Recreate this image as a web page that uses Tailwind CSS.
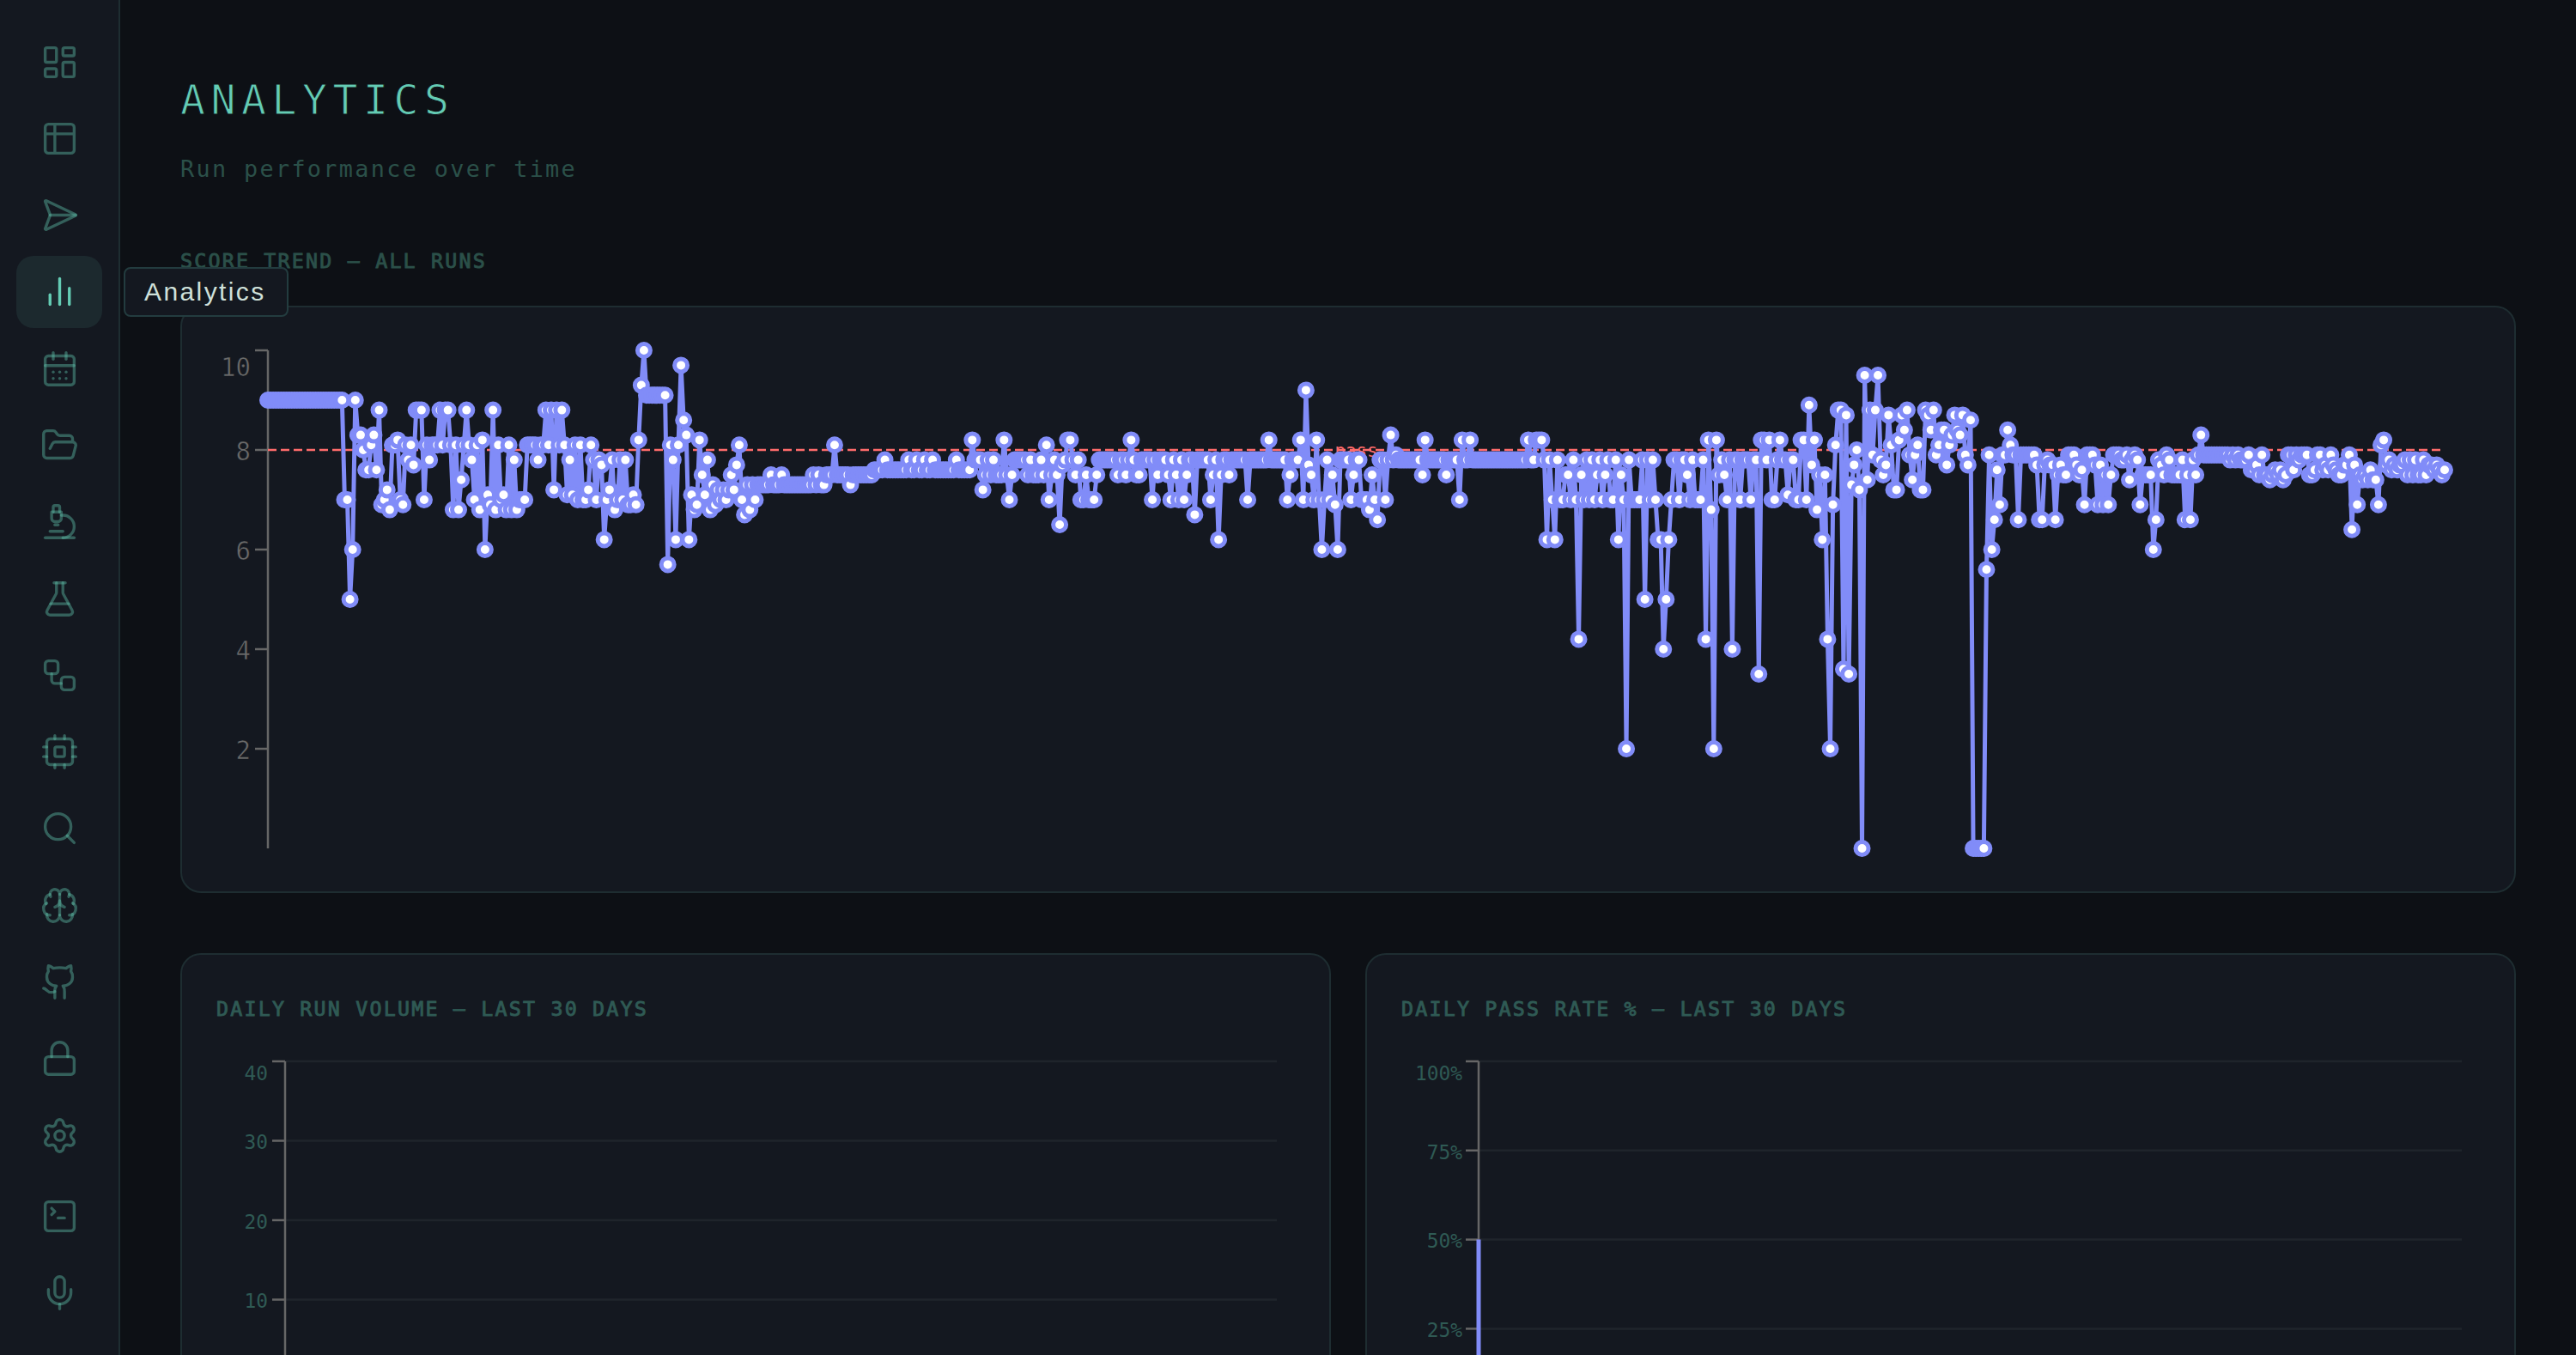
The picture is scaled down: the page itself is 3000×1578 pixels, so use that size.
<!DOCTYPE html>
<html lang="en">
  <head>
    <meta charset="UTF-8" />
    <meta name="viewport" content="width=device-width, initial-scale=1.0" />
    <title>Analytics</title>
    <script src="https://cdn.jsdelivr.net/npm/@tailwindcss/browser@4"></script>
  </head>
  <body class="flex h-screen overflow-hidden bg-[#0d1015] font-['DejaVu_Sans_Mono',monospace]">
    <!-- SIDEBAR -->
    <nav class="relative z-10 flex h-full w-[140px] shrink-0 flex-col items-center gap-[5.3px] border-r-2 border-[#1e2d31] bg-[#141820] pt-[30px] text-[#64ccb4]/40">
      <a class="flex h-[84px] w-[100px] shrink-0 items-center justify-center rounded-[20px]">
        <svg class="size-[45px]" viewBox="0 0 24 24" fill="none" stroke="currentColor" stroke-width="1.8" stroke-linecap="round" stroke-linejoin="round"><rect width="7" height="9" x="3" y="3" rx="1" /><rect width="7" height="5" x="14" y="3" rx="1" /><rect width="7" height="9" x="14" y="12" rx="1" /><rect width="7" height="5" x="3" y="16" rx="1" /></svg>
      </a>
      <a class="flex h-[84px] w-[100px] shrink-0 items-center justify-center rounded-[20px]">
        <svg class="size-[45px]" viewBox="0 0 24 24" fill="none" stroke="currentColor" stroke-width="1.8" stroke-linecap="round" stroke-linejoin="round"><path d="M9 3H5a2 2 0 0 0-2 2v4m6-6h10a2 2 0 0 1 2 2v4M9 3v18m0 0h10a2 2 0 0 0 2-2V9M9 21H5a2 2 0 0 1-2-2V9m0 0h18" /></svg>
      </a>
      <a class="flex h-[84px] w-[100px] shrink-0 items-center justify-center rounded-[20px]">
        <svg class="size-[45px]" viewBox="0 0 24 24" fill="none" stroke="currentColor" stroke-width="1.8" stroke-linecap="round" stroke-linejoin="round"><path d="M3.714 3.048a.498.498 0 0 0-.683.627l2.843 7.627a2 2 0 0 1 0 1.396l-2.842 7.627a.498.498 0 0 0 .682.627l18-8.5a.5.5 0 0 0 0-.904z" /><path d="M6 12h16" /></svg>
      </a>
      <!-- Active item with its tooltip -->
      <a class="relative flex h-[84px] w-[100px] shrink-0 items-center justify-center rounded-[20px] bg-[#1c292e] text-[#64ccb4]">
        <svg class="size-[45px]" viewBox="0 0 24 24" fill="none" stroke="currentColor" stroke-width="1.8" stroke-linecap="round" stroke-linejoin="round"><path d="M18 20V10" /><path d="M12 20V4" /><path d="M6 20v-6" /></svg>
        <span class="absolute top-[13px] left-[125px] flex h-[58px] w-[192px] items-center rounded-[8px] border-2 border-[#233c3f] bg-[#141820] pl-[22px] font-['Liberation_Sans',sans-serif] text-[30px] tracking-[2.4px] text-[#cfe0da]">Analytics</span>
      </a>
      <a class="flex h-[84px] w-[100px] shrink-0 items-center justify-center rounded-[20px]">
        <svg class="size-[45px]" viewBox="0 0 24 24" fill="none" stroke="currentColor" stroke-width="1.8" stroke-linecap="round" stroke-linejoin="round"><path d="M8 2v4" /><path d="M16 2v4" /><rect width="18" height="18" x="3" y="4" rx="2" /><path d="M3 10h18" /><path d="M8 14h.01" /><path d="M12 14h.01" /><path d="M16 14h.01" /><path d="M8 18h.01" /><path d="M12 18h.01" /><path d="M16 18h.01" /></svg>
      </a>
      <a class="flex h-[84px] w-[100px] shrink-0 items-center justify-center rounded-[20px]">
        <svg class="size-[45px]" viewBox="0 0 24 24" fill="none" stroke="currentColor" stroke-width="1.8" stroke-linecap="round" stroke-linejoin="round"><path d="m6 14 1.5-2.9A2 2 0 0 1 9.24 10H20a2 2 0 0 1 1.94 2.5l-1.54 6a2 2 0 0 1-1.95 1.5H4a2 2 0 0 1-2-2V5a2 2 0 0 1 2-2h3.9a2 2 0 0 1 1.69.9l.81 1.2a2 2 0 0 0 1.67.9H18a2 2 0 0 1 2 2v2" /></svg>
      </a>
      <a class="flex h-[84px] w-[100px] shrink-0 items-center justify-center rounded-[20px]">
        <svg class="size-[45px]" viewBox="0 0 24 24" fill="none" stroke="currentColor" stroke-width="1.8" stroke-linecap="round" stroke-linejoin="round"><path d="M6 18h8" /><path d="M3 22h18" /><path d="M14 22a7 7 0 1 0 0-14h-1" /><path d="M9 14h2" /><path d="M9 12a2 2 0 0 1-2-2V6h6v4a2 2 0 0 1-2 2Z" /><path d="M12 6V3a1 1 0 0 0-1-1H9a1 1 0 0 0-1 1v3" /></svg>
      </a>
      <a class="flex h-[84px] w-[100px] shrink-0 items-center justify-center rounded-[20px]">
        <svg class="size-[45px]" viewBox="0 0 24 24" fill="none" stroke="currentColor" stroke-width="1.8" stroke-linecap="round" stroke-linejoin="round"><path d="M14 2v6a2 2 0 0 0 .245.96l5.51 10.08A2 2 0 0 1 18 22H6a2 2 0 0 1-1.755-2.96l5.51-10.08A2 2 0 0 0 10 8V2" /><path d="M6.453 15h11.094" /><path d="M8.5 2h7" /></svg>
      </a>
      <a class="flex h-[84px] w-[100px] shrink-0 items-center justify-center rounded-[20px]">
        <svg class="size-[45px]" viewBox="0 0 24 24" fill="none" stroke="currentColor" stroke-width="1.8" stroke-linecap="round" stroke-linejoin="round"><rect width="8" height="8" x="3" y="3" rx="2" /><path d="M7 11v4a2 2 0 0 0 2 2h4" /><rect width="8" height="8" x="13" y="13" rx="2" /></svg>
      </a>
      <a class="flex h-[84px] w-[100px] shrink-0 items-center justify-center rounded-[20px]">
        <svg class="size-[45px]" viewBox="0 0 24 24" fill="none" stroke="currentColor" stroke-width="1.8" stroke-linecap="round" stroke-linejoin="round"><rect width="16" height="16" x="4" y="4" rx="2" /><rect width="6" height="6" x="9" y="9" rx="1" /><path d="M15 2v2" /><path d="M15 20v2" /><path d="M2 15h2" /><path d="M2 9h2" /><path d="M20 15h2" /><path d="M20 9h2" /><path d="M9 2v2" /><path d="M9 20v2" /></svg>
      </a>
      <a class="flex h-[84px] w-[100px] shrink-0 items-center justify-center rounded-[20px]">
        <svg class="size-[45px]" viewBox="0 0 24 24" fill="none" stroke="currentColor" stroke-width="1.8" stroke-linecap="round" stroke-linejoin="round"><circle cx="11" cy="11" r="8" /><path d="m21 21-4.3-4.3" /></svg>
      </a>
      <a class="flex h-[84px] w-[100px] shrink-0 items-center justify-center rounded-[20px]">
        <svg class="size-[45px]" viewBox="0 0 24 24" fill="none" stroke="currentColor" stroke-width="1.8" stroke-linecap="round" stroke-linejoin="round"><path d="M12 18V5" /><path d="M15 13a4.17 4.17 0 0 1-3-4 4.17 4.17 0 0 1-3 4" /><path d="M17.598 6.5A3 3 0 1 0 12 5a3 3 0 1 0-5.598 1.5" /><path d="M17.997 5.125a4 4 0 0 1 2.526 5.77" /><path d="M18 18a4 4 0 0 0 2-7.464" /><path d="M19.967 17.483A4 4 0 1 1 12 18a4 4 0 1 1-7.967-.517" /><path d="M6 18a4 4 0 0 1-2-7.464" /><path d="M6.003 5.125a4 4 0 0 0-2.526 5.77" /></svg>
      </a>
      <a class="flex h-[84px] w-[100px] shrink-0 items-center justify-center rounded-[20px]">
        <svg class="size-[45px]" viewBox="0 0 24 24" fill="none" stroke="currentColor" stroke-width="1.8" stroke-linecap="round" stroke-linejoin="round"><path d="M15 22v-4a4.8 4.8 0 0 0-1-3.5c3 0 6-2 6-5.5.08-1.25-.27-2.48-1-3.5.28-1.15.28-2.35 0-3.5 0 0-1 0-3 1.5-2.64-.5-5.36-.5-8 0C6 2 5 2 5 2c-.3 1.15-.3 2.35 0 3.5A5.403 5.403 0 0 0 4 9c0 3.5 3 5.5 6 5.5-.39.49-.68 1.05-.85 1.65-.17.6-.22 1.23-.15 1.85v4" /><path d="M9 18c-4.51 2-5-2-7-2" /></svg>
      </a>
      <a class="flex h-[84px] w-[100px] shrink-0 items-center justify-center rounded-[20px]">
        <svg class="size-[45px]" viewBox="0 0 24 24" fill="none" stroke="currentColor" stroke-width="1.8" stroke-linecap="round" stroke-linejoin="round"><rect width="18" height="11" x="3" y="11" rx="2" /><path d="M7 11V7a5 5 0 0 1 10 0v4" /></svg>
      </a>
      <a class="flex h-[84px] w-[100px] shrink-0 items-center justify-center rounded-[20px]">
        <svg class="size-[45px]" viewBox="0 0 24 24" fill="none" stroke="currentColor" stroke-width="1.8" stroke-linecap="round" stroke-linejoin="round"><path d="M9.671 4.136a2.34 2.34 0 0 1 4.659 0 2.34 2.34 0 0 0 3.319 1.915 2.34 2.34 0 0 1 2.33 4.033 2.34 2.34 0 0 0 0 3.831 2.34 2.34 0 0 1-2.33 4.033 2.34 2.34 0 0 0-3.319 1.915 2.34 2.34 0 0 1-4.659 0 2.34 2.34 0 0 0-3.32-1.915 2.34 2.34 0 0 1-2.33-4.033 2.34 2.34 0 0 0 0-3.831A2.34 2.34 0 0 1 6.35 6.051a2.34 2.34 0 0 0 3.319-1.915" /><circle cx="12" cy="12" r="3" /></svg>
      </a>
      <a class="mt-[5px] flex h-[84px] w-[100px] shrink-0 items-center justify-center rounded-[20px]">
        <svg class="size-[45px]" viewBox="0 0 24 24" fill="none" stroke="currentColor" stroke-width="1.8" stroke-linecap="round" stroke-linejoin="round"><path d="m7 11 2-2-2-2" /><path d="M11 13h4" /><rect width="18" height="18" x="3" y="3" rx="2" /></svg>
      </a>
      <a class="flex h-[84px] w-[100px] shrink-0 items-center justify-center rounded-[20px]">
        <svg class="size-[45px]" viewBox="0 0 24 24" fill="none" stroke="currentColor" stroke-width="1.8" stroke-linecap="round" stroke-linejoin="round"><path d="M12 19v3" /><path d="M19 10v2a7 7 0 0 1-14 0v-2" /><rect width="6" height="13" x="9" y="2" rx="3" /></svg>
      </a>
    </nav>

    <!-- CONTENT -->
    <main class="flex min-w-0 flex-1 flex-col pt-[81px] pr-[70px] pl-[70px] whitespace-nowrap">
      <!-- The background-coloured stroke thins the letters to a light weight -->
      <h1 class="h-[70px] text-[48px]/[70px] tracking-[6.6px] text-[#64ccb4] [-webkit-text-stroke:1px_#0d1015]">ANALYTICS</h1>
      <p class="mt-[26px] h-[40px] text-[26.8px]/[40px] tracking-[2.35px] text-[#2b5049]">Run performance over time</p>
      <h2 class="mt-[69px] h-[36px] text-[23.3px]/[36px] tracking-[2.2px] text-[#2b5049] [-webkit-text-stroke:0.9px_currentColor]">SCORE TREND — ALL RUNS</h2>

      <section class="mt-[34px] h-[684px] shrink-0 rounded-[24px] border-2 border-[#1e2d31] bg-[#141820]">
        <svg id="scoreTrend" class="block h-[680px] w-full" viewBox="0 0 2716 680"></svg>
      </section>

      <div class="mt-[70px] grid shrink-0 grid-cols-2 gap-[40px]">
        <section class="h-[640px] rounded-[24px] border-2 border-[#1e2d31] bg-[#141820]">
          <h2 class="ml-[40px] flex h-[104px] items-center pt-[22px] text-[23.3px] tracking-[2.2px] text-[#2f5a54] [-webkit-text-stroke:0.9px_currentColor]">DAILY RUN VOLUME — LAST 30 DAYS</h2>
          <svg id="runVolume" class="block h-[500px] w-full" viewBox="0 0 1336 500"></svg>
        </section>
        <section class="h-[640px] rounded-[24px] border-2 border-[#1e2d31] bg-[#141820]">
          <h2 class="ml-[40px] flex h-[104px] items-center pt-[22px] text-[23.3px] tracking-[2.2px] text-[#2f5a54] [-webkit-text-stroke:0.9px_currentColor]">DAILY PASS RATE % — LAST 30 DAYS</h2>
          <svg id="passRate" class="block h-[500px] w-full" viewBox="0 0 1336 500"></svg>
        </section>
      </div>
    </main>

    <script>
      // Scores in tenths, oldest run first; "90*29" means 29 runs with 9.0
      const runs = `
        90*29 70 70 50 60 90 83 83 80 76 76 81 83 76 88 69 70 72 68 81 81 82 70 69 81 78 81 77 88 88 88 70
        81 78 81 81 81 88 81 88 88 81 68 81 68 74 81 88 81 78 70 81 68 82 60 71 69 88 68 81 70 71 68 81 68 78 68 70 70 70
        81 81 81 81 78 81 81 88 81 88 72 88 81 88 81 71 78 71 81 70 81 70
        70 72 81 78 70 78 77 62 70 72 78 68 70 78 70 78 69 69 71 69 82 93 100 91*8 57 81 78 62 81 97 86 83 62
        71 68 69 82 75 71 78 68 73 69 72 70 72 70 72 75 72 77 81 70 67 73 68 73 70
        73*5 75 73*3 75 73*11 75 73 75 73 73 75*3 81 75*5 73 75*8 76*4 78 76*8 78 76 76 78 76 76 78 76 76 78 76*8 78 76*5
        82 78 78 78 72 75 78 75 78 75 75 75 82 75 70 75 78*5 75 78 75 75 75 78 75 81 70 75 78 75 65
        77 78 82 82 78 75 78 70 70 75 70 70 70 75 78*7 75 78 78 75 78 82 78 75 75 78*4 70 78 75 78*3 75 70 78 75 70 78 70 75
        78 78 67 78*5 70 75 78 62 75 78 78 75 78*6 70 78*7 82 78*6 70 75 78*3 82 70 92 77 75 70 82 70 60 70
        78 70 75 69 60 78*4 70 75 78 78 70 70 70 68 75 70 66 78 78 70 78 83 78 79 78*9 75 82 78*7 75 78*4 70 82 78 78 82
        78*21 82 78 78 82 82 82 78 62 78 70 62 78 70 70 75 75 70 78 70 42 75 70 78 70
        78 70 75 78 70 75 78 70 70 78 62 75 70 20 78 70 70 70 70 78 50 78 70 78 70 62 62 40 50 62
        70 78 78 70 78 78 75 70 78 70 70 70 78 42 82 68 20 82 75 78 75 70 78 40 78 78 70 78 78 78
        70 78 78 35 82 82 78 82 70 70 78 82 78 78 71 78 78 70 70 82 82 70 89 77 82 68 75 62 75 42
        20 69 81 88 88 36 87 35 73 77 80 72 0 95 74 88 79 88 95 78 75 77 87 81 72 72 82 87 84 88
        79 74 79 81 72 72 88 87 84 88 79 81 84 84 77 81 83 87 84 83 87 79 77 86 0*5 56
        79 60 66 76 69 79 79 84 81 79 79 66 79*6 77 66 66 77 78 77 77 66 75 77 75 75
        79 79 79 77 75 76 69 79 79 79 77 69 77 69 75 69 75 79 79 79 78 78 79 74 78 79 78 69 75 75
        75 75 60 66 78 77 75 79 78 75 75 75 75 78 66 75 66 78 75 79 83 79*10 78 79 78 79 78 78 78 79 76
        76 77 75 79 75 75 74 75 76 75 76 74 75 79 79 76 79 78 79 79 79 75 75 76 79 79 76 77 76 79
        77 76 75 75 77 77 79 64 77 69 75 74 75 74 76 74 74 69 81 82 77 78 76 77 76 77 77 78 75 78
        75 78 75 75 78 75 77 77 76 77 76 75 76`;
      const scores = runs.trim().split(/\s+/).flatMap((token) => {
        const [value, times] = token.split("*");
        return Array(Number(times || 1)).fill(value / 10);
      });

      const line = (x1, y1, x2, y2, stroke, extra = "") =>
        `<line x1="${x1}" y1="${y1}" x2="${x2}" y2="${y2}" stroke="${stroke}" stroke-width="2.5" ${extra}/>`;

      // Right-aligned tick label, squeezed to half an em per character
      const label = (text, right, y, size, fill, extra = "") =>
        `<text x="${right - (text.length * size) / 2}" y="${y}" fill="${fill}" font-size="${size * 0.86}" textLength="${(text.length * size) / 2}" lengthAdjust="spacingAndGlyphs" ${extra}>${text}</text>`;

      // Score trend
      function drawScoreTrend() {
        const left = 100, top = 50, width = 2535, unit = 58;
        // Runs are 1/822 of the plot width apart
        const points = scores.map((s, i) => [
          (left + (i * width) / 822).toFixed(2),
          (top + (10 - s) * unit).toFixed(1),
        ]);
        let html = line(left, top, left, top + 10 * unit, "#666");
        [[10, 79.7], [8, 177.5], [6, 293.7], [4, 409.7], [2, 525.7]].forEach(([value, base]) => {
          const y = top + (10 - value) * unit;
          html += line(left - 15, y, left, y, "#666");
          html += label(String(value), 80, base, 35, "#6a6a6a", 'stroke="#141820" stroke-width="0.6"');
        });
        html += line(left, top + 2 * unit, left + width, top + 2 * unit, "#ff6b6b", 'stroke-dasharray="10 5"');
        html += label("pass", 1392.5, 174, 25, "#ff6b6b");
        html += `<polyline points="${points.join(" ")}" fill="none" stroke="#818cf8" stroke-width="5" />`;
        html += points
          .map(([x, y]) => `<circle cx="${x}" cy="${y}" r="7.5" fill="#fff" stroke="#818cf8" stroke-width="5" />`)
          .join("");
        document.getElementById("scoreTrend").innerHTML = html;
      }

      // Axis and grid shared by both daily charts
      function drawDaily(id, left, right, step, ticks, labelRight) {
        const top = 20;
        let html = "";
        ticks.forEach((tick, i) => {
          const y = top + i * step;
          html += line(left, y, right, y, "#1f242b");
          html += line(left - 15, y, left, y, "#666");
          html += label(tick, labelRight, i === 0 ? y + 22 : y + 9.7, 27.5, "#2f5a54");
        });
        html += line(left, top, left, 500, "#666");
        document.getElementById(id).innerHTML = html;
      }

      drawScoreTrend();
      drawDaily("runVolume", 120, 1275, 92.5, ["40", "30", "20", "10"], 100);
      drawDaily("passRate", 130, 1275, 103.8, ["100%", "75%", "50%", "25%"], 111);
      document.getElementById("passRate").innerHTML +=
        '<line x1="130" y1="227.5" x2="130" y2="500" stroke="#818cf8" stroke-width="5" />';
    </script>
  </body>
</html>
